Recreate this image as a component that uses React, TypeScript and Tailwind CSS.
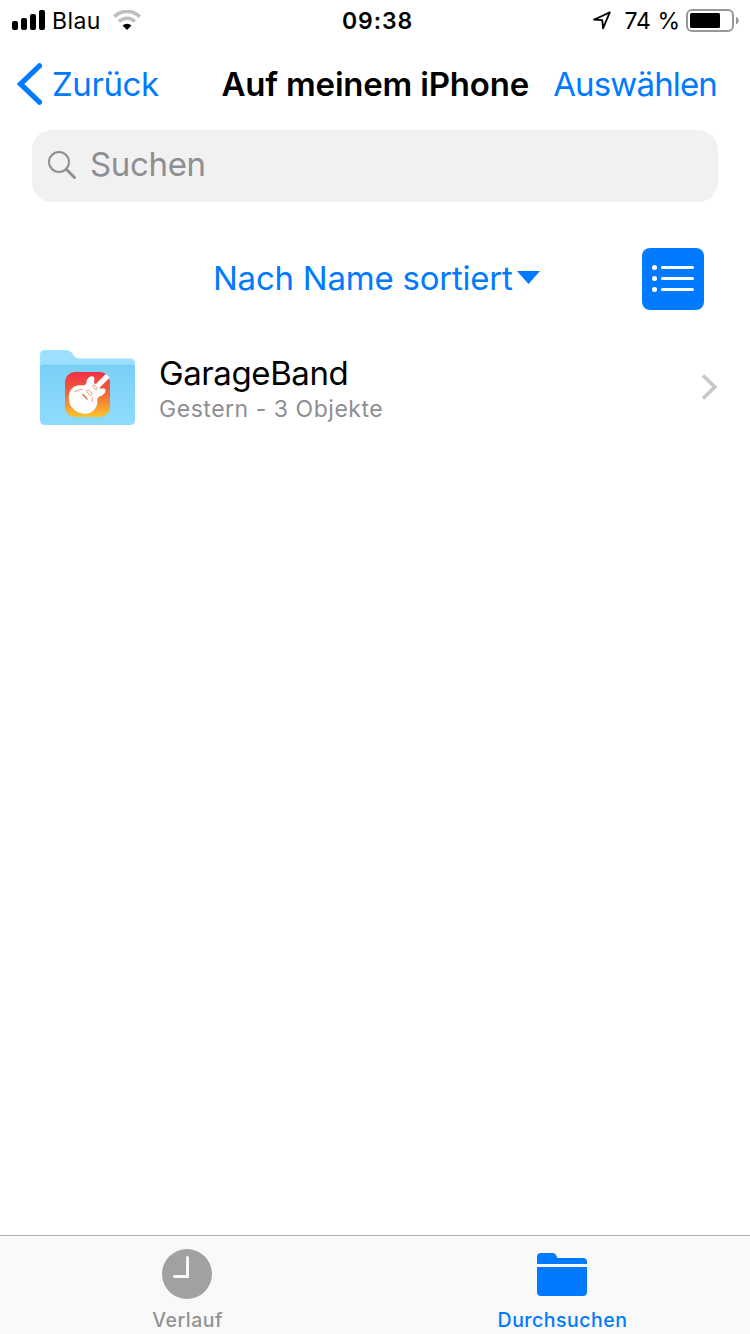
import type { ReactNode } from "react";

function SignalIcon() {
  return (
    <svg width="34" height="20" viewBox="0 0 34 20" className="shrink-0">
      <rect x="0" y="11" width="6" height="9" rx="2" />
      <rect x="9" y="8" width="6" height="12" rx="2" />
      <rect x="18" y="4" width="6" height="16" rx="2" />
      <rect x="27" y="0" width="6" height="20" rx="2" />
    </svg>
  );
}

function WifiIcon() {
  return (
    <svg width="28" height="20" viewBox="0 0 28 20" className="shrink-0">
      <path d="M1.2 6.6a18.2 18.2 0 0 1 25.6 0" fill="none" stroke="#bfbfbf" strokeWidth="3.6" />
      <path d="M6 11.6a11.3 11.3 0 0 1 16 0" fill="none" stroke="#bfbfbf" strokeWidth="3.6" />
      <path d="M9.6 15.6a6.3 6.3 0 0 1 8.8 0L14 20z" />
    </svg>
  );
}

function LocationIcon() {
  return (
    <svg width="20" height="19" viewBox="0 0 20 19" className="shrink-0">
      <path
        d="M17.8 1.4 2 8.7l8.3.5.7 8.2z"
        fill="none"
        stroke="#000"
        strokeWidth="1.8"
        strokeLinejoin="round"
      />
    </svg>
  );
}

function BatteryIcon() {
  return (
    <svg width="54" height="24" viewBox="0 0 54 24" className="shrink-0">
      <rect x="1" y="1" width="46" height="21" rx="5" fill="none" stroke="#979797" strokeWidth="2" />
      <rect x="4" y="4" width="30" height="15" rx="1.5" />
      <path d="M50 8c3.6 1.2 3.6 6 0 7.4z" fill="#979797" />
    </svg>
  );
}

function GarageBandFolder() {
  return (
    <svg width="95" height="75" viewBox="0 0 95 75" className="shrink-0">
      <defs>
        <linearGradient id="folder" x1="0" y1="0" x2="0" y2="1">
          <stop offset="0" stopColor="#7acff5" />
          <stop offset="1" stopColor="#8edcfd" />
        </linearGradient>
        <linearGradient id="app" x1="0" y1="0" x2="0" y2="1">
          <stop offset="0" stopColor="#ee2f45" />
          <stop offset="0.5" stopColor="#f2693a" />
          <stop offset="1" stopColor="#fbc52c" />
        </linearGradient>
      </defs>
      <path
        d="M0 25V5Q0 0 5 0h21q3.5 0 5.5 2.5l3 4Q36 8.5 39 8.5h51q5 0 5 5V25z"
        fill="#9be1ff"
      />
      <path d="M0 18q0-3.5 4-3.5h87q4 0 4 3.5v52q0 5-5 5H5q-5 0-5-5z" fill="url(#folder)" />
      <svg x="25" y="22" width="45" height="45" viewBox="0 0 135 135">
        <rect width="135" height="135" rx="30" fill="url(#app)" />
        <path
          d="M64 32C65 23 71 14 80 13C87 13 90 18 88 24C86 30 87 36 93 36L123 5L134 17L103 48C108 52 114 48 120 51C124 57 119 67 109 71C101 74 96 77 97 86C98 103 88 117 74 123C53 129 33 121 23 109C12 97 8 77 14 60C20 46 34 38 50 40C59 41 63 38 64 32Z"
          fill="#fff"
        />
        <g fill="none" stroke="#ef7a50" strokeWidth="2.4" strokeLinecap="round">
          <path d="M29 58c9 1 11-6 22-6M83 77c-4 5-2 9 1 13" />
          <path d="M54 68l12 13" strokeWidth="5" />
          <path d="M65 57l5-4 12 13-5 4zM83 42l4-4 11 11-4 4z" />
        </g>
      </svg>
    </svg>
  );
}

function StatusBar() {
  return (
    <div className="flex h-10 items-start text-[23px] leading-[42px]">
      <div className="flex w-[342px] items-start pl-3">
        <span className="mt-[10px]">
          <SignalIcon />
        </span>
        <span className="ml-[6px] tracking-[0.4px]">Blau</span>
        <span className="mt-[10px] ml-[12px]">
          <WifiIcon />
        </span>
      </div>
      <span className="font-semibold tracking-[0.9px]">09:38</span>
      <div className="ml-auto flex items-start pr-[10px]">
        <span className="mt-[11px] mr-[12px]">
          <LocationIcon />
        </span>
        <span className="mr-[6px]">74 %</span>
        <span className="mt-[9px]">
          <BatteryIcon />
        </span>
      </div>
    </div>
  );
}

function NavBar() {
  return (
    <header className="flex h-[90px] items-start pr-[33px] pl-[17px] text-[33px] leading-[88px] whitespace-nowrap">
      <button type="button" className="flex w-[204.5px] items-start text-[#007aff]">
        <svg width="26" height="42" viewBox="0 0 26 42" className="mt-[23px] shrink-0">
          <path
            d="M22.5 2.8 3.5 21l19 18.2"
            fill="none"
            stroke="currentColor"
            strokeWidth="5.2"
            strokeLinecap="round"
          />
        </svg>
        <span className="ml-[9px] tracking-[-0.4px]">Zurück</span>
      </button>
      <h1 className="font-semibold tracking-[-0.2px]">Auf meinem iPhone</h1>
      <button type="button" className="ml-auto tracking-[-0.85px] text-[#007aff]">
        Auswählen
      </button>
    </header>
  );
}

function SearchField() {
  return (
    <div className="mx-8 flex h-[72px] items-start rounded-[20px] bg-[#f1f1f1] pl-4 text-[33px] leading-[68px] text-[#8e8e93]">
      <svg width="29" height="29" viewBox="0 0 29 29" className="mt-[21px] shrink-0">
        <circle cx="11" cy="11" r="10" fill="none" stroke="currentColor" strokeWidth="2" />
        <path d="m18.5 18.5 8 8" stroke="currentColor" strokeWidth="3" strokeLinecap="round" />
      </svg>
      <span className="ml-[13px] tracking-[-0.35px]">Suchen</span>
    </div>
  );
}

function SortRow() {
  return (
    <div className="mt-[46px] flex h-[62px] items-start justify-between pr-[46px] pl-[213px] text-[#007aff]">
      <button
        type="button"
        className="flex items-start text-[33px] leading-[60px] tracking-[-0.24px] whitespace-nowrap"
      >
        Nach Name sortiert
        <svg width="24" height="14" viewBox="0 0 24 14" className="mt-[23px] ml-[5px]">
          <path d="M0 0h23L11.5 13z" fill="currentColor" />
        </svg>
      </button>
      <button type="button" className="h-[62px] w-[62px] rounded-[8px] bg-[#007aff]">
        <svg width="62" height="62" viewBox="0 0 62 62" fill="#fff">
          {[19.5, 30.5, 41.5].map((y) => (
            <g key={y}>
              <circle cx="12.5" cy={y} r="2.5" />
              <rect x="19" y={y - 1.5} width="33" height="3" rx="1.5" />
            </g>
          ))}
        </svg>
      </button>
    </div>
  );
}

function FolderRow() {
  return (
    <div className="mt-10 flex h-[76px] items-start pr-8 pl-10">
      <GarageBandFolder />
      <div className="ml-[24px] whitespace-nowrap">
        <p className="text-[33px] leading-[46px] tracking-[-0.4px]">GarageBand</p>
        <p className="text-[23px] leading-[26px] tracking-[0.53px] text-[#8e8e93]">
          Gestern - 3 Objekte
        </p>
      </div>
      <svg width="17" height="26" viewBox="0 0 17 26" className="mt-[24px] ml-auto">
        <path d="m2 1.5 11.8 11.5L2 24.5" fill="none" stroke="#c7c7cc" strokeWidth="3.6" />
      </svg>
    </div>
  );
}

function Tab({ label, active, children }: { label: string; active?: boolean; children: ReactNode }) {
  return (
    <button
      type="button"
      className={`flex w-[375px] shrink-0 flex-col items-center ${active ? "text-[#007aff]" : "text-[#929292]"}`}
    >
      <svg width="50" height="50" viewBox="0 0 50 50" className="mt-[13px] mr-px">
        {children}
      </svg>
      <span className="mt-[9px] text-[19.5px] leading-[24px] font-medium tracking-[0.5px]">{label}</span>
    </button>
  );
}

function TabBar() {
  return (
    <nav className="mt-auto flex h-[99px] overflow-hidden border-t border-[#b2b2b2] bg-[#f9f9f9]">
      <Tab label="Verlauf">
        <circle cx="25" cy="25" r="25" fill="#a1a1a1" />
        <path
          d="M25.5 8.5v19h-13"
          fill="none"
          stroke="#f9f9f9"
          strokeWidth="3"
          strokeLinecap="round"
        />
      </Tab>
      <Tab label="Durchsuchen" active>
        <path
          d="M0 15V8q0-4 4-4h12q2 0 3 2l1.5 3H46q4 0 4 4v2zM0 18h50v25q0 4-4 4H4q-4 0-4-4z"
          fill="currentColor"
        />
      </Tab>
    </nav>
  );
}

export default function App() {
  return (
    <div className="flex h-[1334px] w-[750px] flex-col overflow-hidden bg-white font-['Inter','Liberation_Sans',sans-serif] text-black">
      <StatusBar />
      <NavBar />
      <SearchField />
      <SortRow />
      <FolderRow />
      <TabBar />
    </div>
  );
}
